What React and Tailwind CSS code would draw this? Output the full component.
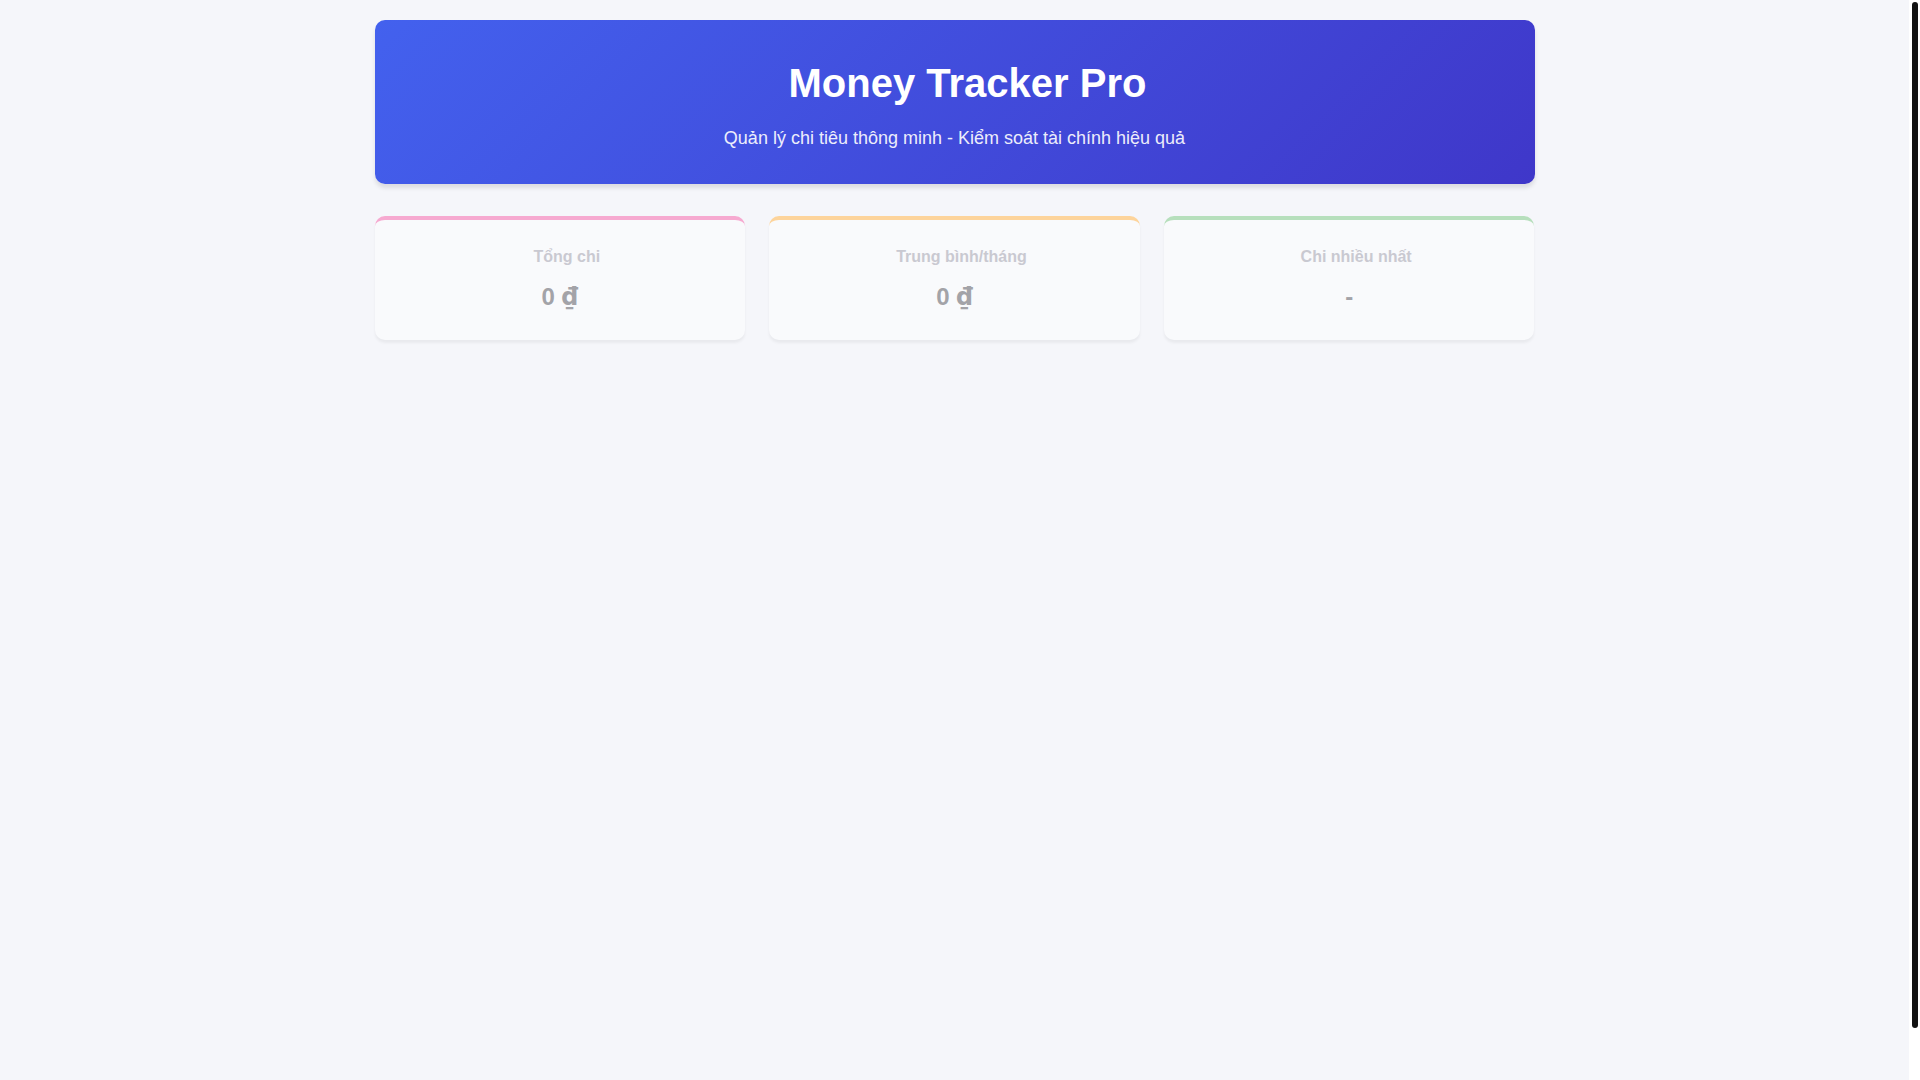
import React from 'react';

// Summary cards shown under the header
const stats = [
    { label: "Tổng chi", value: "0", currency: true, bar: "border-[#f6a9d0]" },
    { label: "Trung bình/tháng", value: "0", currency: true, bar: "border-[#fdd49b]" },
    { label: "Chi nhiều nhất", value: "-", currency: false, bar: "border-[#b6dfbc]" },
];

function StatCard({ label, value, currency, bar }) {
    return (
        <div className={`bg-[#f9fafc] rounded-[10px] border-t-4 ${bar} px-6 pt-[25px] pb-[25px] text-center shadow-[0_3px_3px_rgba(0,0,0,0.05)]`}>
            {/* label sits a little right of centre, like in the original */}
            <div className="pl-3.5 text-base leading-6 font-bold text-[#c9c9d1] mb-2.5">{label}</div>
            <div className="text-2xl leading-9 font-bold text-[#a3a3a8]">
                {value}
                {currency && (
                    <>
                        {" "}
                        <span style={{ fontFamily: '"DejaVu Sans", sans-serif' }}>₫</span>
                    </>
                )}
            </div>
        </div>
    );
}

export default function App() {
    return (
        <div className="flex h-screen overflow-hidden bg-[#f5f6fa]" style={{ fontFamily: '"Liberation Sans", Arial, sans-serif' }}>
            <main className="flex-1 min-w-0">
                <div className="max-w-[1200px] mx-auto px-5 pt-5">
                    {/* Header banner */}
                    <header className="rounded-[10px] bg-[linear-gradient(135deg,#4361ee,#3f37c9)] text-white text-center pt-10 pb-[36px] mb-8 shadow-[0_4px_4px_rgba(0,0,0,0.1)]">
                        <h1 className="pl-[26px] text-[40px] leading-[46px] font-bold mb-[22px]">Money Tracker Pro</h1>
                        <p className="text-[18px] leading-5 opacity-90">Quản lý chi tiêu thông minh - Kiểm soát tài chính hiệu quả</p>
                    </header>

                    {/* Stats */}
                    <div className="grid grid-cols-3 gap-6">
                        {stats.map((s) => (
                            <StatCard key={s.label} {...s} />
                        ))}
                    </div>
                </div>
            </main>

            {/* page scrollbar */}
            <aside className="w-[11px] shrink-0 bg-white pl-[3px] pr-[2px] pt-[2px]">
                <div className="h-[1026px] rounded-full bg-[#111111]" />
            </aside>
        </div>
    );
}
